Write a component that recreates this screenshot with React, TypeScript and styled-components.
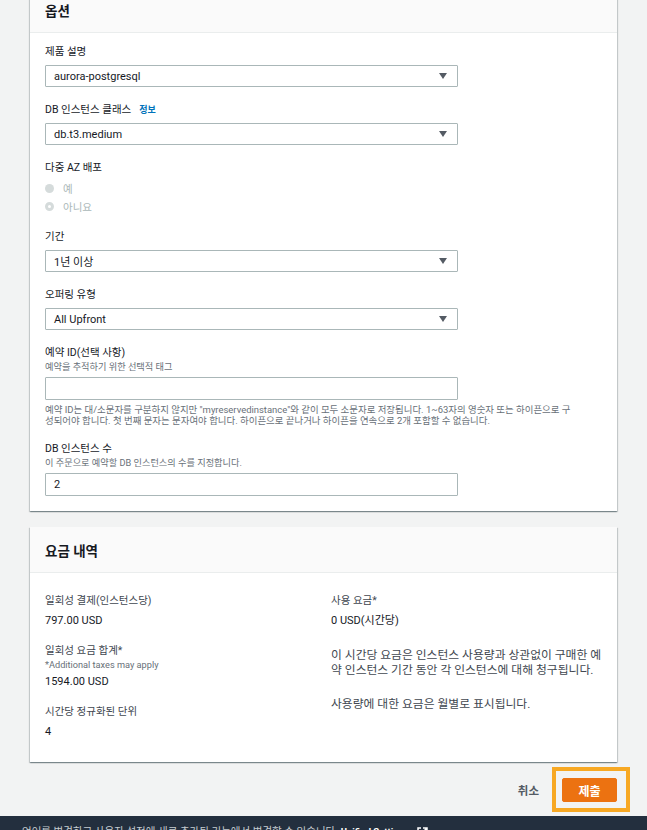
import React from "react";
import styled, { createGlobalStyle } from "styled-components";

const GlobalStyle = createGlobalStyle`
  html, body {
    margin: 0;
    padding: 0;
    background: #f2f3f3;
    overflow: hidden;
  }
  body {
    font-family: Roboto, "Noto Sans CJK KR", sans-serif;
    color: #16191f;
  }
  * { box-sizing: border-box; }
`;

const Page = styled.main`
  margin-top: -13px;
  padding: 0 30px;
  display: flex;
  flex-direction: column;
  gap: 16px;
`;

const Card = styled.section`
  background: #ffffff;
  box-shadow: 0 1px 1px 0 rgba(0, 28, 36, 0.3), 1px 1px 1px 0 rgba(0, 28, 36, 0.15),
    -1px 1px 1px 0 rgba(0, 28, 36, 0.15);
`;

const CardHeader = styled.header`
  height: 46px;
  padding: 0 15px;
  display: flex;
  align-items: center;
  background: #fafafa;
  border-bottom: 1px solid #eaeded;
`;

const CardTitle = styled.h2`
  margin: 0;
  font-size: 13.5px;
  font-weight: 700;
  color: #16191f;
`;

const FormBody = styled.div`
  padding: 11px 15px 15px;
  display: flex;
  flex-direction: column;
  gap: 15px;
`;

const Field = styled.div<{ $tight?: boolean }>`
  display: flex;
  flex-direction: column;
  margin-bottom: ${(p) => (p.$tight ? "-1px" : "0")};
`;

const Label = styled.div`
  display: flex;
  align-items: baseline;
  gap: 8px;
  font-size: 10.5px;
  line-height: 16px;
  color: #16191f;
`;

const InfoLink = styled.a`
  font-size: 9px;
  font-weight: 700;
  color: #0073bb;
  text-decoration: none;
`;

const Desc = styled.div`
  font-size: 9.2px;
  line-height: 11px;
  color: #687078;
`;

const SelectBox = styled.div`
  margin-top: 5px;
  width: 413px;
  height: 22px;
  padding: 0 10px 0 8px;
  border: 1px solid #aab7b8;
  border-radius: 1px;
  background: #fff;
  display: flex;
  align-items: center;
  justify-content: space-between;
  font-size: 11px;
  color: #16191f;
`;

const TextInput = styled.div`
  margin-top: 5px;
  width: 413px;
  height: 23px;
  padding: 0 8px;
  border: 1px solid #aab7b8;
  border-radius: 1px;
  background: #fff;
  display: flex;
  align-items: center;
  font-size: 11px;
  color: #16191f;
`;

const Help = styled.div`
  margin-top: 4px;
  font-size: 9.45px;
  line-height: 11px;
  color: #687078;
  white-space: nowrap;
`;

const RadioGroup = styled.div`
  margin-top: 3px;
  display: flex;
  flex-direction: column;
`;

const RadioRow = styled.label`
  height: 18px;
  display: flex;
  align-items: center;
  gap: 9px;
  font-size: 10.5px;
  color: #aab7b8;
`;

const RadioDot = styled.span<{ $checked?: boolean }>`
  width: 9px;
  height: 9px;
  border-radius: 50%;
  background: ${(p) => (p.$checked ? "#ffffff" : "#d5dbdb")};
  border: ${(p) => (p.$checked ? "3px solid #d5dbdb" : "none")};
  flex: none;
`;

const PriceBody = styled.div`
  padding: 20px 15px 22px;
  display: grid;
  grid-template-columns: 1fr 1fr;
  column-gap: 15px;
`;

const Column = styled.div`
  display: flex;
  flex-direction: column;
  gap: 14px;
`;

const KeyValue = styled.div`
  display: flex;
  flex-direction: column;
`;

const Key = styled.div`
  font-size: 10.5px;
  line-height: 16px;
  color: #414750;
`;

const Value = styled.div`
  margin-top: 4px;
  font-size: 11px;
  line-height: 16px;
  color: #16191f;
`;

const Para = styled.p<{ $top: number }>`
  margin: ${(p) => p.$top}px 0 0;
  font-size: 11.8px;
  line-height: 15px;
  color: #414750;
  white-space: nowrap;
`;

const RightColumn = styled.div`
  display: flex;
  flex-direction: column;
`;

const Actions = styled.div`
  display: flex;
  justify-content: flex-end;
  align-items: center;
  margin-bottom: 14px;
`;

const CancelButton = styled.button`
  margin-right: 23px;
  padding: 0;
  border: none;
  background: transparent;
  font-family: inherit;
  font-size: 11.5px;
  font-weight: 700;
  color: #545b64;
`;

const Highlight = styled.span`
  position: relative;
  display: inline-flex;
  &::before {
    content: "";
    position: absolute;
    top: -11px;
    bottom: -10px;
    left: -10px;
    right: -13px;
    border: 4px solid #f7a823;
    pointer-events: none;
  }
`;

const SubmitButton = styled.button`
  width: 55px;
  height: 24px;
  padding: 0;
  border: 1px solid #ec7211;
  border-radius: 2px;
  background: #ec7211;
  font-family: inherit;
  font-size: 12px;
  font-weight: 700;
  color: #ffffff;
`;

const Footer = styled.footer`
  height: 40px;
  padding: 9px 22px;
  background: #232f3e;
  display: flex;
  align-items: flex-start;
  gap: 8px;
  font-size: 10.5px;
  line-height: 14px;
  color: #c6ccd0;
`;

const FooterStrong = styled.span`
  font-size: 9.5px;
  font-weight: 700;
  color: #ffffff;
`;

const Caret = () => (
  <svg width="8" height="6" viewBox="0 0 8 6" aria-hidden="true">
    <path d="M0 0 H8 L4 6 Z" fill="#545b64" />
  </svg>
);

const ExtIcon = () => (
  <svg width="11" height="11" viewBox="0 0 11 11" aria-hidden="true" style={{ marginTop: 2 }}>
    <path d="M4 1 H1 V10 H10 V7" fill="none" stroke="#fff" strokeWidth="1.5" />
    <path d="M6 1 H10 V5 M10 1 L5 6" fill="none" stroke="#fff" strokeWidth="1.5" />
  </svg>
);

type SelectFieldProps = { label: React.ReactNode; value: string };

const SelectField = ({ label, value }: SelectFieldProps) => (
  <Field>
    <Label>{label}</Label>
    <SelectBox>
      <span>{value}</span>
      <Caret />
    </SelectBox>
  </Field>
);

export default function App() {
  return (
    <>
      <GlobalStyle />
      <Page>
        <Card>
          <CardHeader>
            <CardTitle>옵션</CardTitle>
          </CardHeader>
          <FormBody>
            <SelectField label="제품 설명" value="aurora-postgresql" />
            <SelectField
              label={
                <>
                  <span>DB 인스턴스 클래스</span>
                  <InfoLink href="#">정보</InfoLink>
                </>
              }
              value="db.t3.medium"
            />
            <Field $tight>
              <Label>다중 AZ 배포</Label>
              <RadioGroup>
                <RadioRow>
                  <RadioDot />
                  예
                </RadioRow>
                <RadioRow>
                  <RadioDot $checked />
                  아니요
                </RadioRow>
              </RadioGroup>
            </Field>
            <SelectField label="기간" value="1년 이상" />
            <SelectField label="오퍼링 유형" value="All Upfront" />
            <Field>
              <Label>예약 ID(선택 사항)</Label>
              <Desc>예약을 추적하기 위한 선택적 태그</Desc>
              <TextInput />
              <Help>
                예약 ID는 대/소문자를 구분하지 않지만 "myreservedinstance"와 같이 모두 소문자로 저장됩니다. 1~63자의 영숫자 또는 하이픈으로 구
                <br />
                성되어야 합니다. 첫 번째 문자는 문자여야 합니다. 하이픈으로 끝나거나 하이픈을 연속으로 2개 포함할 수 없습니다.
              </Help>
            </Field>
            <Field>
              <Label>DB 인스턴스 수</Label>
              <Desc>이 주문으로 예약할 DB 인스턴스의 수를 지정합니다.</Desc>
              <TextInput>2</TextInput>
            </Field>
          </FormBody>
        </Card>

        <Card>
          <CardHeader>
            <CardTitle>요금 내역</CardTitle>
          </CardHeader>
          <PriceBody>
            <Column>
              <KeyValue>
                <Key>일회성 결제(인스턴스당)</Key>
                <Value>797.00 USD</Value>
              </KeyValue>
              <KeyValue>
                <Key>일회성 요금 합계*</Key>
                <Desc>*Additional taxes may apply</Desc>
                <Value>1594.00 USD</Value>
              </KeyValue>
              <KeyValue>
                <Key>시간당 정규화된 단위</Key>
                <Value>4</Value>
              </KeyValue>
            </Column>
            <RightColumn>
              <KeyValue>
                <Key>사용 요금*</Key>
                <Value>0 USD(시간당)</Value>
              </KeyValue>
              <Para $top={19}>
                이 시간당 요금은 인스턴스 사용량과 상관없이 구매한 예
                <br />
                약 인스턴스 기간 동안 각 인스턴스에 대해 청구됩니다.
              </Para>
              <Para $top={19}>사용량에 대한 요금은 월별로 표시됩니다.</Para>
            </RightColumn>
          </PriceBody>
        </Card>

        <Actions>
          <CancelButton type="button">취소</CancelButton>
          <Highlight>
            <SubmitButton type="button">제출</SubmitButton>
          </Highlight>
        </Actions>
      </Page>
      <Footer>
        <span>
          언어를 변경하고 사용자 설정에 새로 추가된 기능에서 변경할 수 있습니다.{" "}
          <FooterStrong>Unified Settings</FooterStrong>
        </span>
        <ExtIcon />
      </Footer>
    </>
  );
}
